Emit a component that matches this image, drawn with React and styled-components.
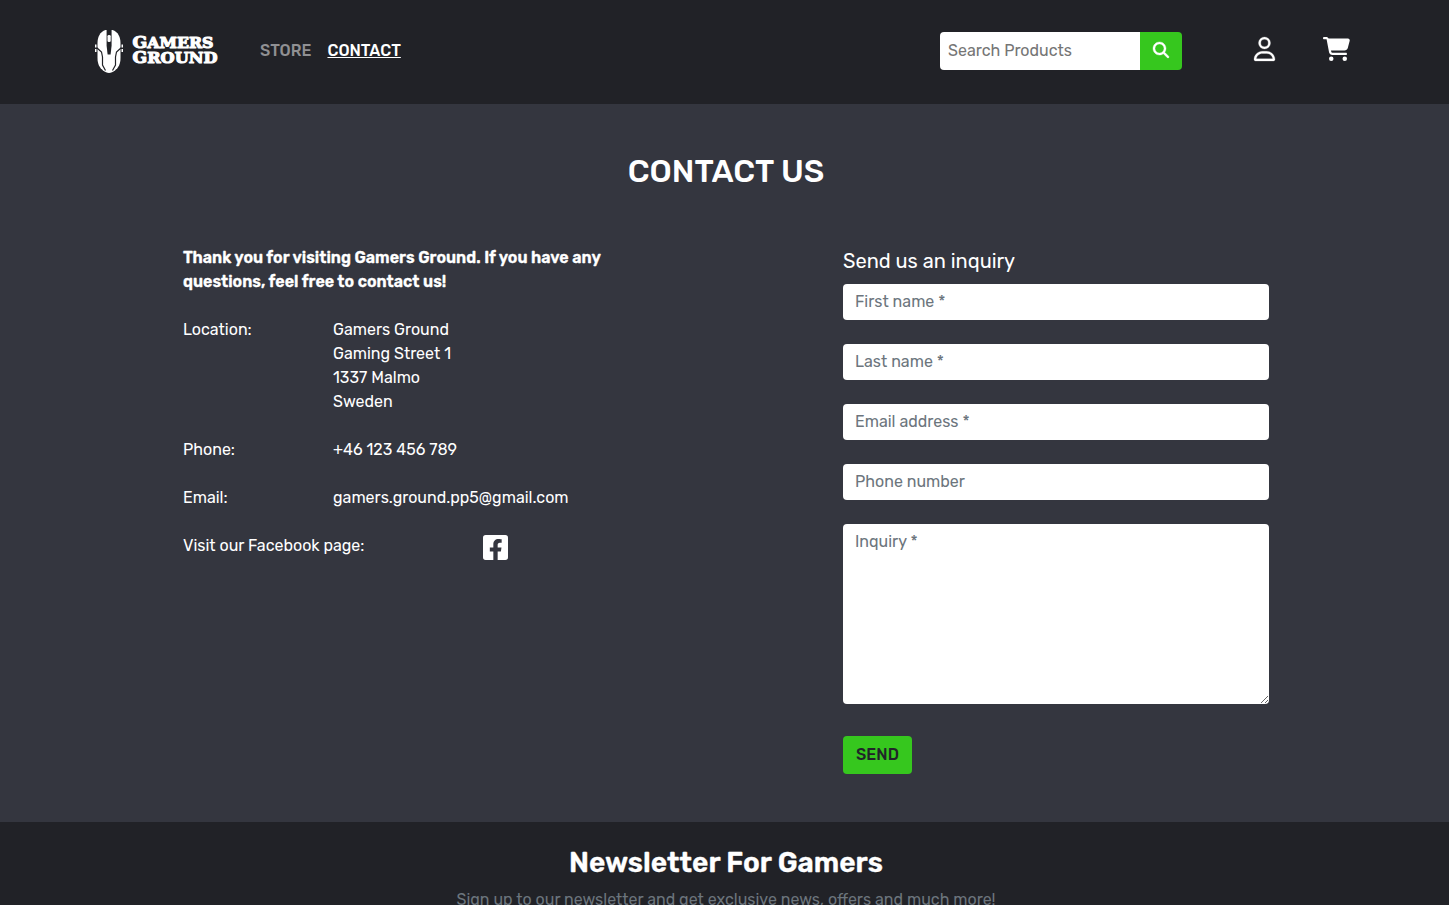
import React from 'react';
import styled, { createGlobalStyle } from 'styled-components';
import { FaRegUser, FaCartShopping, FaMagnifyingGlass } from 'react-icons/fa6';
import { FaFacebookSquare } from 'react-icons/fa';

const GlobalStyle = createGlobalStyle`
  *, *::before, *::after { box-sizing: border-box; }
  html, body { margin: 0; height: 100%; overflow: hidden; }
  body {
    background: #34363f;
    color: #fff;
    font-family: Rubik, Roboto, sans-serif;
    font-size: 16px;
    line-height: 24px;
  }
  input, textarea, button { font: inherit; margin: 0; border: 0; outline: 0; }
  h1, h2, h3, p, dl, dd, dt { margin: 0; font-weight: inherit; }
  a { color: inherit; text-decoration: none; }
`;

const Page = styled.div`
  height: 905px;
  overflow: hidden;
`;

const Header = styled.header`
  display: flex;
  align-items: flex-start;
  height: 104px;
  padding: 28px 99px 0 94px;
  background: #212227;
`;

const Brand = styled.a`
  display: flex;
  width: 126px;
  height: 46px;
  margin-right: 40px;
`;

const Nav = styled.nav`
  display: flex;
  gap: 16px;
  padding-top: 11px;
`;

const NavLink = styled.a`
  white-space: nowrap;
  font-weight: 500;
  color: ${(p) => (p.$active ? '#fff' : '#909093')};
  text-decoration: ${(p) => (p.$active ? 'underline' : 'none')};
`;

const Search = styled.form`
  display: flex;
  width: 242px;
  height: 38px;
  margin: 4px 72px 0 auto;
  border-radius: 4px;
  overflow: hidden;
`;

const SearchInput = styled.input`
  width: 200px;
  padding: 0 8px;
  background: #fff;
  &::placeholder { color: #757575; opacity: 1; }
`;

const SearchButton = styled.button`
  display: flex;
  align-items: center;
  justify-content: center;
  width: 42px;
  padding: 0 0 2px;
  background: #36c71e;
  color: #fff;
  font-size: 16px;
  svg { stroke: #fff; stroke-width: 12px; overflow: visible; }
`;

const HeaderIcon = styled.a`
  display: flex;
  margin: 9px 0 0 ${(p) => p.$gap || 0}px;
  svg {
    display: block;
    width: ${(p) => p.$width}px;
    height: 24px;
    overflow: visible;
    stroke: #fff;
    stroke-width: ${(p) => p.$stroke || 0}px;
  }
`;

const Main = styled.main`
  height: 718px;
  padding: 48px 180px 0 183px;
  background: #34363f;
`;

const Title = styled.h1`
  text-align: center;
  font-size: 32px;
  line-height: 38px;
  font-weight: 500;
`;

const Columns = styled.div`
  display: flex;
  justify-content: space-between;
  padding-top: 56px;
`;

const Info = styled.section`
  width: 426px;
`;

const Lead = styled.p`
  font-weight: 600;
  -webkit-text-stroke: 0.3px #fff;
`;

const Entry = styled.dl`
  display: grid;
  grid-template-columns: ${(p) => p.$label || 150}px 1fr;
  margin-top: 24px;
`;

const Facebook = styled.a`
  display: block;
  height: 24px;
  margin-top: -1px;
  svg { display: block; width: 25px; height: 29px; }
`;

const Inquiry = styled.form`
  display: flex;
  flex-direction: column;
  align-items: flex-start;
  width: 426px;
`;

const FormTitle = styled.h2`
  margin: 3px 0 11px;
  font-size: 20px;
  line-height: 24px;
`;

const Field = styled.input`
  width: 426px;
  height: 36px;
  margin-bottom: 24px;
  padding: 0 12px 1px;
  border-radius: 4px;
  background: #fff;
  &::placeholder { color: #6c757d; opacity: 1; }
`;

const Message = styled(Field).attrs({ as: 'textarea' })`
  display: block;
  height: 180px;
  margin-bottom: 32px;
  padding: 6px 12px;
  resize: vertical;
`;

const SendButton = styled.button`
  width: 69px;
  height: 38px;
  padding: 0;
  border-radius: 4px;
  background: #36c71e;
  color: #212529;
  font-weight: 500;
`;

const Newsletter = styled.footer`
  height: 140px;
  padding: 24px 0 0 3px;
  background: #212227;
  text-align: center;
`;

const NewsletterTitle = styled.h3`
  margin-bottom: 8px;
  font-size: 28px;
  line-height: 34px;
  font-weight: 600;
  -webkit-text-stroke: 0.3px #fff;
`;

const NewsletterText = styled.p`
  color: #6c757d;
`;

function Logo() {
  return (
    <svg width="126" height="46" viewBox="0 0 126 46" fill="#fff">
      <path d="M11.500 2C6 3.800 3.500 9 3.500 15v15c0 6 2 9.500 5.500 12.500 2 1.600 4 2.400 6 2.400s4-.8 6-2.400c3.500-3 5.500-6.500 5.500-12.500V15C26.500 9 24 3.800 18.500 2z" />
      <path d="M12.600 1.500h5v16l-1 9h-3l-1-9z" fill="#212227" />
      <rect x="13.500" y="7" width="3.200" height="7" rx="1.300" />
      <path d="M2.500 19.500l5 4.500 1 5v8l3 5.500M27.500 19.500l-5 4.500-1 5v8l-3 5.500" fill="none" stroke="#212227" strokeWidth="1.200" />
      <path d="M1 16.500h1.500v3H1zM1 21h1.500v3H1zM27.500 16.500H29v3h-1.500zM27.500 21H29v3h-1.500z" />
      <g fontFamily="'DejaVu Serif', serif" fontWeight="700" stroke="#fff" strokeWidth="1.100" strokeLinejoin="round">
        <text x="38.500" y="20.400" textLength="81" lengthAdjust="spacingAndGlyphs" fontSize="15">
          <tspan fontSize="16.500">G</tspan>AMERS
        </text>
        <text x="38.500" y="35.400" textLength="85" lengthAdjust="spacingAndGlyphs" fontSize="15.500">
          <tspan fontSize="16.500">G</tspan>ROUND
        </text>
      </g>
    </svg>
  );
}

export default function App() {
  return (
    <Page>
      <GlobalStyle />
      <Header>
        <Brand href="#"><Logo /></Brand>
        <Nav>
          <NavLink href="#">STORE</NavLink>
          <NavLink href="#" $active>CONTACT</NavLink>
        </Nav>
        <Search>
          <SearchInput placeholder="Search Products" />
          <SearchButton type="button"><FaMagnifyingGlass /></SearchButton>
        </Search>
        <HeaderIcon href="#" $width={21} $stroke={5}><FaRegUser /></HeaderIcon>
        <HeaderIcon href="#" $width={27} $gap={48}><FaCartShopping /></HeaderIcon>
      </Header>

      <Main>
        <Title>CONTACT US</Title>
        <Columns>
          <Info>
            <Lead>Thank you for visiting Gamers Ground. If you have any questions, feel free to contact us!</Lead>
            <Entry>
              <dt>Location:</dt>
              <dd>
                Gamers Ground<br />
                Gaming Street 1<br />
                1337 Malmo<br />
                Sweden
              </dd>
            </Entry>
            <Entry>
              <dt>Phone:</dt>
              <dd>+46 123 456 789</dd>
            </Entry>
            <Entry>
              <dt>Email:</dt>
              <dd>gamers.ground.pp5@gmail.com</dd>
            </Entry>
            <Entry $label={300}>
              <dt>Visit our Facebook page:</dt>
              <dd><Facebook href="#"><FaFacebookSquare /></Facebook></dd>
            </Entry>
          </Info>

          <Inquiry>
            <FormTitle>Send us an inquiry</FormTitle>
            <Field placeholder="First name *" />
            <Field placeholder="Last name *" />
            <Field placeholder="Email address *" />
            <Field placeholder="Phone number" />
            <Message placeholder="Inquiry *" />
            <SendButton type="button">SEND</SendButton>
          </Inquiry>
        </Columns>
      </Main>

      <Newsletter>
        <NewsletterTitle>Newsletter For Gamers</NewsletterTitle>
        <NewsletterText>Sign up to our newsletter and get exclusive news, offers and much more!</NewsletterText>
      </Newsletter>
    </Page>
  );
}
